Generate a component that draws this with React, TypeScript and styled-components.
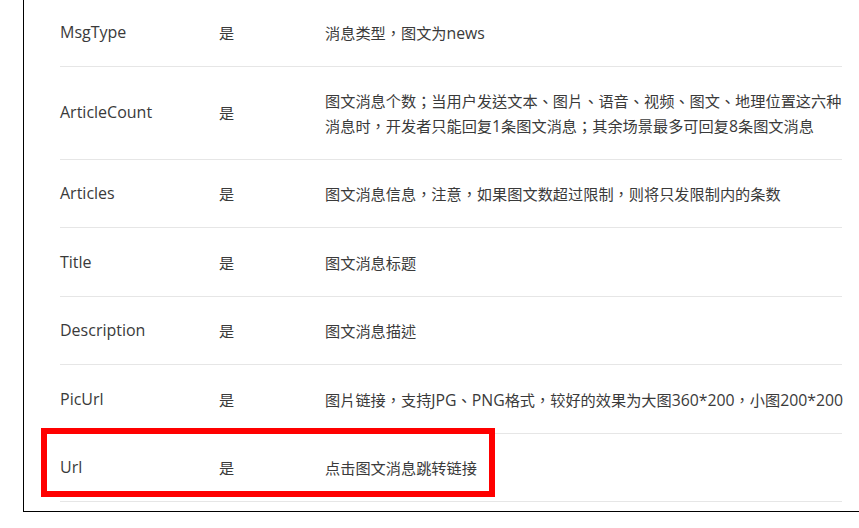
import React from "react";
import styled, { createGlobalStyle } from "styled-components";

const GlobalStyle = createGlobalStyle`
  html, body {
    margin: 0;
    padding: 0;
    background: #ffffff;
    overflow: hidden;
  }
  body {
    font-family: "Open Sans", "Noto Sans CJK TC", sans-serif;
    color: #333333;
  }
`;

const Frame = styled.div`
  margin: -2px 0 0 23px;
  border-left: 1px solid #000;
  border-bottom: 1px solid #000;
  padding: 0 0 9px 36px;
`;

const Table = styled.div`
  width: 782px;
  display: flex;
  flex-direction: column;
`;

const Row = styled.div`
  position: relative;
  display: grid;
  grid-template-columns: 159px 106px 1fr;
  align-items: center;
  padding: 21.5px 0;
  border-bottom: 1px solid #e6e6e6;
`;

const NameCell = styled.div`
  font-family: "Open Sans", "Noto Sans CJK TC", sans-serif;
  font-size: 16px;
  line-height: 24.5px;
  color: #3a3a3a;
`;

const Cell = styled.div`
  font-family: "Noto Sans CJK TC", "Noto Sans CJK SC", sans-serif;
  font-size: 15.2px;
  line-height: 24.5px;
  color: #3a3a3a;
  white-space: nowrap;
`;

const Latin = styled.span`
  font-family: "Open Sans", sans-serif;
  font-size: 15.8px;
  line-height: 1;
`;

const Highlight = styled.div`
  position: absolute;
  left: -19px;
  top: -6px;
  width: 454px;
  height: 69px;
  box-sizing: border-box;
  border: 6px solid #ff0000;
  pointer-events: none;
`;

type Item = {
  name: string;
  required: string;
  desc: React.ReactNode;
  highlight?: boolean;
};

const items: Item[] = [
  {
    name: "MsgType",
    required: "是",
    desc: (
      <>
        消息类型，图文为<Latin>news</Latin>
      </>
    ),
  },
  {
    name: "ArticleCount",
    required: "是",
    desc: (
      <>
        图文消息个数；当用户发送文本、图片、语音、视频、图文、地理位置这六种
        <br />
        消息时，开发者只能回复<Latin>1</Latin>条图文消息；其余场景最多可回复
        <Latin>8</Latin>条图文消息
      </>
    ),
  },
  {
    name: "Articles",
    required: "是",
    desc: "图文消息信息，注意，如果图文数超过限制，则将只发限制内的条数",
  },
  { name: "Title", required: "是", desc: "图文消息标题" },
  { name: "Description", required: "是", desc: "图文消息描述" },
  {
    name: "PicUrl",
    required: "是",
    desc: (
      <>
        图片链接，支持<Latin>JPG</Latin>、<Latin>PNG</Latin>
        格式，较好的效果为大图<Latin>360*200</Latin>，小图
        <Latin>200*200</Latin>
      </>
    ),
  },
  { name: "Url", required: "是", desc: "点击图文消息跳转链接", highlight: true },
];

export default function App() {
  return (
    <>
      <GlobalStyle />
      <Frame>
        <Table>
          {items.map((it) => (
            <Row key={it.name}>
              <NameCell>{it.name}</NameCell>
              <Cell>{it.required}</Cell>
              <Cell>{it.desc}</Cell>
              {it.highlight && <Highlight />}
            </Row>
          ))}
        </Table>
      </Frame>
    </>
  );
}
